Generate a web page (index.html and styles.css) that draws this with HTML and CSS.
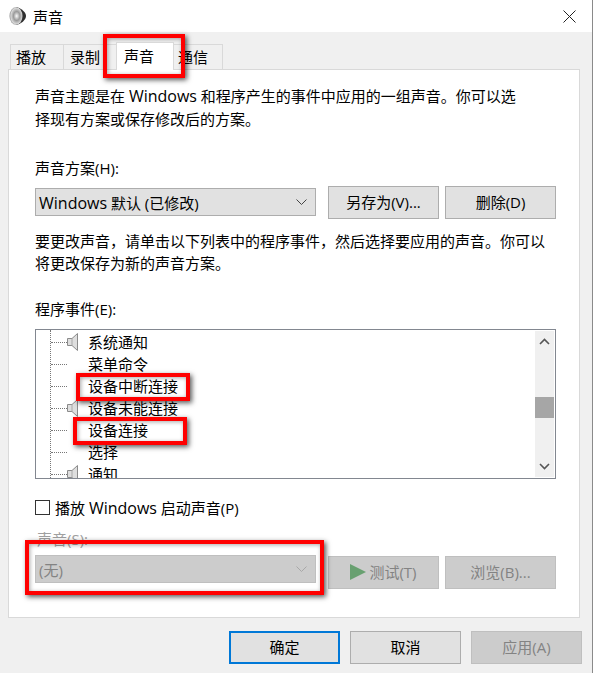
FILE: index.html
```html
<!DOCTYPE html>
<html lang="zh-CN">
    <head>
        <meta charset="UTF-8">
        <title>声音</title>
        <link rel="stylesheet" href="styles.css">
    </head>
    <body>
        <div class="titleBar">
            <svg class="titleIcon" width="18" height="20" viewBox="0 0 18 20">
                <defs>
                    <radialGradient id="face" cx="0.55" cy="0.5" r="0.55">
                        <stop offset="0" stop-color="#fafafa"/>
                        <stop offset="0.45" stop-color="#9a9a9a"/>
                        <stop offset="0.8" stop-color="#d8d8d8"/>
                        <stop offset="1" stop-color="#8c8c8c"/>
                    </radialGradient>
                </defs>
                <path d="M7 1C12 2 17 6 17 10s-5 8-10 9z" fill="#2e2e2e"/>
                <ellipse cx="7" cy="10" rx="6.5" ry="9" fill="url(#face)"/>
            </svg>
            <span class="titleText">声音</span>
            <svg class="closeIcon" width="13" height="13" viewBox="0 0 13 13">
                <path d="M0.5 0.5L12.5 12.5M12.5 0.5L0.5 12.5" stroke="#222" stroke-width="1" fill="none"/>
            </svg>
        </div>

        <div class="tabs">
            <div class="tab">播放</div>
            <div class="tab">录制</div>
            <div class="tab tabActive">声音</div>
            <div class="tab tabLast">通信</div>
        </div>

        <div class="panel">
            <p class="text introText">声音主题是在 <span class="latin">Windows</span> 和程序产生的事件中应用的一组声音。你可以选<br>择现有方案或保存修改后的方案。</p>

            <div class="label schemeLabel">声音方案(H):</div>
            <div class="controlRow schemeRow">
                <div class="combo">
                    <span><span class="latin">Windows</span> 默认 (已修改)</span>
                    <svg class="comboArrow" width="11" height="6" viewBox="0 0 11 6"><path d="M0.5 0.5L5.5 5.5L10.5 0.5" fill="none" stroke="#444"/></svg>
                </div>
                <div class="button">另存为(V)...</div>
                <div class="button">删除(D)</div>
            </div>

            <p class="text helpText">要更改声音，请单击以下列表中的程序事件，然后选择要应用的声音。你可以<br>将更改保存为新的声音方案。</p>

            <div class="label eventsLabel">程序事件(E):</div>
            <div class="listBox">
                <div class="treeLine"></div>
                <div class="treeRows">
                    <div class="treeRow"><i class="dots"></i><svg class="speaker" width="11" height="18" viewBox="0 0 11 18"><use href="#speakerShape"/></svg><span>系统通知</span></div>
                    <div class="treeRow"><i class="dots"></i><b class="noIcon"></b><span>菜单命令</span></div>
                    <div class="treeRow"><i class="dots"></i><b class="noIcon"></b><span>设备中断连接</span></div>
                    <div class="treeRow"><i class="dots"></i><svg class="speaker" width="11" height="18" viewBox="0 0 11 18"><use href="#speakerShape"/></svg><span>设备未能连接</span></div>
                    <div class="treeRow"><i class="dots"></i><b class="noIcon"></b><span>设备连接</span></div>
                    <div class="treeRow"><i class="dots"></i><b class="noIcon"></b><span>选择</span></div>
                    <div class="treeRow"><i class="dots"></i><svg class="speaker" width="11" height="18" viewBox="0 0 11 18"><use href="#speakerShape"/></svg><span>通知</span></div>
                </div>
                <div class="scrollBar">
                    <svg width="11" height="7" viewBox="0 0 11 7"><path d="M1 6L5.5 1.5L10 6" fill="none" stroke="#555" stroke-width="1.6"/></svg>
                    <div class="scrollTrack"><div class="scrollThumb"></div></div>
                    <svg width="11" height="7" viewBox="0 0 11 7"><path d="M1 1L5.5 5.5L10 1" fill="none" stroke="#555" stroke-width="1.6"/></svg>
                </div>
            </div>

            <div class="checkRow">
                <div class="checkBox"></div>
                <span>播放 <span class="latin">Windows</span> 启动声音(P)</span>
            </div>

            <div class="label disabledLabel">声音(S):</div>
            <div class="controlRow soundRow">
                <div class="combo comboDisabled">
                    <span>(无)</span>
                    <svg class="comboArrow" width="11" height="6" viewBox="0 0 11 6"><path d="M0.5 0.5L5.5 5.5L10.5 0.5" fill="none" stroke="#a8a8a8"/></svg>
                </div>
                <div class="button buttonDisabled">
                    <svg class="playIcon" width="16" height="16" viewBox="0 0 16 16"><path d="M0 0L16 8L0 16z" fill="#68a070"/></svg>
                    <span>测试(T)</span>
                </div>
                <div class="button buttonDisabled">浏览(B)...</div>
            </div>
        </div>

        <div class="footer">
            <div class="button footerButton buttonDefault">确定</div>
            <div class="button footerButton">取消</div>
            <div class="button footerButton buttonDisabled">应用(A)</div>
        </div>

        <!-- red marks drawn over the dialog -->
        <div class="mark markTab"></div>
        <div class="mark markRowOne"></div>
        <div class="mark markRowTwo"></div>
        <div class="mark markCombo"></div>

        <svg width="0" height="0" class="defs">
            <defs>
                <g id="speakerShape">
                    <path d="M0.5 5.5H5L10.5 0.5V17.5L5 12.5H0.5z" fill="#dedede" stroke="#8a8a8a"/>
                    <path d="M5 5.5V12.5" stroke="#a8a8a8"/>
                </g>
            </defs>
        </svg>
    </body>
</html>
```

FILE: styles.css
```css
* {
    box-sizing: border-box;
}

html, body {
    margin: 0;
    padding: 0;
}

body {
    position: relative;
    width: 593px;
    height: 673px;
    overflow: hidden;
    background: #f0f0f0;
    border-right: 1px solid #8a8a8a;
    color: #000;
    font-family: "Open Sans", "Noto Sans CJK SC", sans-serif;
    font-size: 15px;
}

.latin {
    font-size: 16px;
    line-height: 1;
}

.titleBar {
    display: flex;
    align-items: center;
    height: 32px;
    padding-left: 9px;
    padding-right: 16px;
    background: #fff;
}

.titleIcon {
    margin-right: 6px;
}

.titleText {
    font-size: 15px;
}

.closeIcon {
    margin-left: auto;
}

.tabs {
    display: flex;
    align-items: flex-end;
    height: 37px;
    padding-left: 10px;
}

.tab {
    position: relative;
    width: 54px;
    height: 25px;
    margin-left: -1px;
    padding-left: 6px;
    border: 1px solid #d9d9d9;
    border-bottom: none;
    background: #f0f0f0;
    line-height: 25px;
}

.tab:first-child {
    margin-left: 0;
    padding-left: 5px;
}

.tabActive {
    z-index: 1;
    width: 58px;
    height: 28px;
    margin-bottom: -1px;
    padding-left: 7px;
    background: #fff;
    line-height: 26px;
}

.tabLast {
    width: 50px;
    padding-left: 4px;
}

.panel {
    width: 572px;
    height: 549px;
    margin-left: 8px;
    padding: 0 23px 0 26px;
    border: 1px solid #d9d9d9;
    background: #fff;
}

.text {
    margin: 0;
    line-height: 23px;
}

.introText {
    margin-top: 15px;
}

.label {
    line-height: 23px;
}

.schemeLabel {
    margin-top: 26px;
}

.controlRow {
    display: flex;
    align-items: center;
    gap: 6px;
}

.schemeRow {
    height: 32px;
    margin-top: 6px;
}

.combo {
    display: flex;
    align-items: center;
    justify-content: space-between;
    width: 281px;
    height: 28px;
    margin-right: 6px;
    padding: 0 8px 0 3px;
    border: 1px solid #adadad;
    background: #e1e1e1;
}

.button {
    display: flex;
    align-items: center;
    justify-content: center;
    width: 111px;
    height: 33px;
    padding-bottom: 2px;
    border: 1px solid #adadad;
    background: #e1e1e1;
}

.helpText {
    margin-top: 12px;
    line-height: 22px;
}

.eventsLabel {
    margin-top: 24px;
}

.listBox {
    position: relative;
    display: flex;
    justify-content: space-between;
    height: 150px;
    margin-top: 8px;
    border: 1px solid #828790;
    overflow: hidden;
}

.treeLine {
    position: absolute;
    left: 14px;
    top: 0;
    bottom: 0;
    border-left: 1px dotted #777;
}

.treeRows {
    padding-top: 1px;
}

.treeRow {
    display: flex;
    align-items: center;
    height: 22px;
    padding-left: 15px;
}

.treeRow span {
    margin-bottom: 2px;
}

.dots {
    width: 16px;
    border-top: 1px dotted #777;
}

.speaker {
    margin-right: 10px;
}

.noIcon {
    width: 21px;
}

.scrollBar {
    display: flex;
    flex-direction: column;
    align-items: center;
    justify-content: space-between;
    width: 19px;
    margin: 1px 1px 1px 0;
    padding: 7px 0;
    background: #f0f0f0;
}

.scrollTrack {
    flex: 1;
    width: 100%;
    padding-top: 52px;
}

.scrollThumb {
    height: 21px;
    background: #a6a6a6;
}

.checkRow {
    display: flex;
    align-items: center;
    gap: 5px;
    height: 23px;
    margin-top: 17px;
}

.checkBox {
    width: 15px;
    height: 15px;
    border: 1px solid #333;
    background: #fff;
}

.disabledLabel {
    margin-top: 9px;
    padding-left: 2px;
    color: #a0a0a0;
}

.soundRow {
    align-items: flex-start;
    height: 33px;
    margin-top: 5px;
}

.comboDisabled {
    margin-top: -1px;
    border-color: #bfbfbf;
    background: #cccccc;
    color: #838383;
}

.buttonDisabled {
    border-color: #bfbfbf;
    background: #cccccc;
    color: #838383;
}

.playIcon {
    margin-right: 3px;
}

.footer {
    display: flex;
    gap: 10px;
    height: 33px;
    margin-top: 13px;
    padding-left: 229px;
}

.buttonDefault {
    border: 2px solid #0078d7;
}

.mark {
    position: absolute;
    border: 4px solid #ff0000;
    box-shadow: 2px 2px 5px rgba(0, 0, 0, 0.65), inset 1px 1px 4px rgba(0, 0, 0, 0.35);
}

.markTab {
    left: 103px;
    top: 34px;
    width: 82px;
    height: 44px;
}

.markRowOne {
    left: 76px;
    top: 373px;
    width: 114px;
    height: 28px;
}

.markRowTwo {
    left: 73px;
    top: 417px;
    width: 114px;
    height: 28px;
}

.markCombo {
    left: 25px;
    top: 540px;
    width: 299px;
    height: 55px;
}

.defs {
    position: absolute;
}
```
